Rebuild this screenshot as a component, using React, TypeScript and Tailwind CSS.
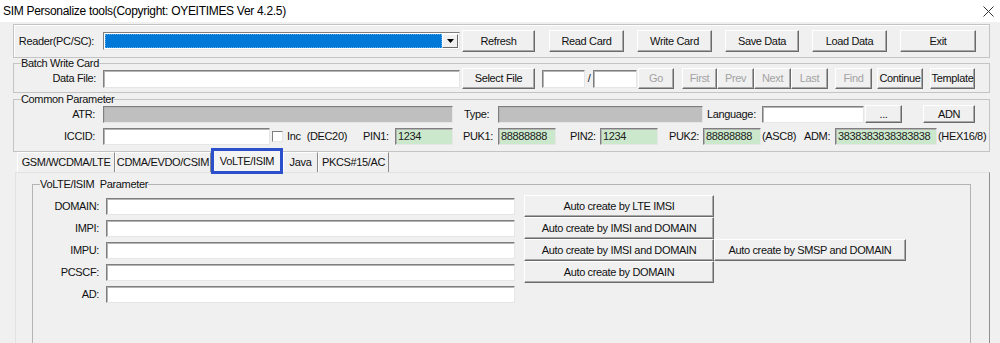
import React from 'react';

const Btn: React.FC<{ w: string; h?: string; disabled?: boolean; className?: string; children: React.ReactNode }> = ({
  w,
  h = 'h-[22px]',
  disabled,
  className = '',
  children
}) => (
  <div
    className={`${w} ${h} ${className} shrink-0 flex items-center justify-center bg-[#f0f0f0] border border-t-white border-l-white border-r-[#6b6b6b] border-b-[#6b6b6b] shadow-[inset_-1px_-1px_0_#a9a9a9] ${
      disabled ? 'text-[#a3a3a3]' : 'text-[#111]'
    }`}
  >
    {children}
  </div>
);

const Field: React.FC<{ w: string; h?: string; bg?: string; children?: React.ReactNode }> = ({
  w,
  h = 'h-[17px]',
  bg = 'bg-white',
  children
}) => (
  <div
    className={`${w} ${h} ${bg} shrink-0 flex items-center pl-[2px] border border-t-[#7f7f7f] border-l-[#7f7f7f] border-r-[#e6e6e6] border-b-[#e6e6e6] shadow-[inset_1px_1px_0_#b4b4b4] text-[#222]`}
  >
    {children}
  </div>
);

const Label: React.FC<{ w: string; children: React.ReactNode; right?: boolean; pad?: string }> = ({
  w,
  children,
  right,
  pad = ''
}) => (
  <div className={`${w} ${pad} shrink-0 whitespace-nowrap ${right ? 'text-right' : 'text-left'}`}>{children}</div>
);

const Tab: React.FC<{ w: string; children: React.ReactNode }> = ({ w, children }) => (
  <div
    className={`${w} h-[20px] shrink-0 flex items-center justify-center border-l border-t border-l-white border-t-white border-r border-r-[#8a8a8a]`}
  >
    {children}
  </div>
);

const volteRows: [string, string[]][] = [
  ['DOMAIN:', ['Auto create by LTE IMSI']],
  ['IMPI:', ['Auto create by IMSI and DOMAIN']],
  ['IMPU:', ['Auto create by IMSI and DOMAIN', 'Auto create by SMSP and DOMAIN']],
  ['PCSCF:', ['Auto create by DOMAIN']],
  ['AD:', []]
];

export default function App() {
  return (
    <div className="w-[1000px] h-[343px] overflow-hidden bg-[#f0f0f0] text-[11px] leading-[13px] text-[#111] font-['Liberation_Sans',Arial,sans-serif] tracking-[-0.35px]">
      {/* title bar */}
      <div className="h-[22px] bg-white flex items-center justify-between pl-[3px] pr-[6px]">
        <span className="text-[12px] tracking-[-0.3px] text-black">SIM Personalize tools(Copyright: OYEITIMES Ver 4.2.5)</span>
        <svg width="11" height="11" viewBox="0 0 11 11" className="mt-[1px]">
          <path d="M0.5 0.5 L10.5 10.5 M10.5 0.5 L0.5 10.5" stroke="#333" strokeWidth="1" />
        </svg>
      </div>

      <div className="pl-[13px]">
        {/* reader row */}
        <div className="mt-[2px] w-[977px] h-[34px] flex items-center border border-[#c4c4c4] shadow-[inset_1px_1px_0_#fff]">
          <Label w="w-[89px]" right pad="pr-[9px]">Reader(PC/SC):</Label>
          <div className="w-[357px] h-[18px] shrink-0 flex border border-t-[#7f7f7f] border-l-[#7f7f7f] border-r-[#e6e6e6] border-b-[#e6e6e6] bg-white p-[1px]">
            <div className="flex-1 bg-[#0078d7] border border-dotted border-[#5aa9ea]" />
            <div className="w-[16px] flex items-center justify-center bg-[#f0f0f0] border border-t-white border-l-white border-r-[#6b6b6b] border-b-[#6b6b6b]">
              <svg width="7" height="4" viewBox="0 0 7 4">
                <path d="M0 0 H7 L3.5 4 Z" fill="#000" />
              </svg>
            </div>
          </div>
          <Btn w="w-[73px]" className="ml-[2px]">Refresh</Btn>
          <Btn w="w-[75px]" className="ml-[14px]">Read Card</Btn>
          <Btn w="w-[75px]" className="ml-[13px]">Write Card</Btn>
          <Btn w="w-[74px]" className="ml-[13px]">Save Data</Btn>
          <Btn w="w-[75px]" className="ml-[13px]">Load Data</Btn>
          <Btn w="w-[76px]" className="ml-[13px]">Exit</Btn>
        </div>

        {/* batch write card */}
        <fieldset className="w-[977px] border border-[#c4c4c4] pb-[3px]">
          <legend className="ml-[7px] leading-[10px]">Batch Write Card</legend>
          <div className="h-[21px] flex items-center">
            <Label w="w-[89px]" right pad="pr-[7px]">Data File:</Label>
            <Field w="w-[357px]" h="h-[18px]" />
            <Btn w="w-[73px]" h="h-[21px]" className="ml-[2px]">Select File</Btn>
            <div className="ml-[7px]">
              <Field w="w-[43px]" h="h-[18px]" />
            </div>
            <div className="w-[8px] text-center shrink-0">/</div>
            <Field w="w-[44px]" h="h-[18px]" />
            <Btn w="w-[36px]" h="h-[21px]" className="ml-[1px]" disabled>Go</Btn>
            <Btn w="w-[35px]" h="h-[21px]" className="ml-[8px]" disabled>First</Btn>
            <Btn w="w-[37px]" h="h-[21px]" disabled>Prev</Btn>
            <Btn w="w-[37px]" h="h-[21px]" disabled>Next</Btn>
            <Btn w="w-[37px]" h="h-[21px]" disabled>Last</Btn>
            <Btn w="w-[37px]" h="h-[21px]" className="ml-[7px]" disabled>Find</Btn>
            <Btn w="w-[46px]" h="h-[21px]" className="ml-[5px]">Continue</Btn>
            <Btn w="w-[45px]" h="h-[21px]" className="ml-[7px]">Template</Btn>
          </div>
        </fieldset>

        {/* common parameter */}
        <fieldset className="mt-[1px] w-[977px] border border-[#c4c4c4] pb-[5px]">
          <legend className="ml-[7px] leading-[10px]">Common Parameter</legend>
          <div className="h-[20px] flex items-center">
            <Label w="w-[89px]" right pad="pr-[8px]">ATR:</Label>
            <Field w="w-[350px]" bg="bg-[#bfbfbf]" />
            <Label w="w-[45px]" pad="pl-[11px]">Type:</Label>
            <Field w="w-[205px]" bg="bg-[#bfbfbf]" />
            <Label w="w-[59px]" pad="pl-[4px]">Language:</Label>
            <Field w="w-[102px]" />
            <Btn w="w-[37px]" h="h-[18px]" className="ml-[1px]">...</Btn>
            <Btn w="w-[52px]" h="h-[18px]" className="ml-[21px]">ADN</Btn>
          </div>
          <div className="mt-[2px] h-[20px] flex items-center">
            <Label w="w-[89px]" right pad="pr-[8px]">ICCID:</Label>
            <Field w="w-[167px]" />
            <div className="ml-[2px] w-[11px] h-[11px] shrink-0 bg-white border border-t-[#7f7f7f] border-l-[#7f7f7f] border-r-[#e6e6e6] border-b-[#e6e6e6]" />
            <div className="w-[79px] shrink-0 pl-[4px] flex">
              <span>Inc</span>
              <span className="ml-[6px]">(DEC20)</span>
            </div>
            <Label w="w-[33px]" pad="pl-[1px]">PIN1:</Label>
            <Field w="w-[58px]" bg="bg-[#cce8cc]">1234</Field>
            <Label w="w-[45px]" pad="pl-[10px]">PUK1:</Label>
            <Field w="w-[58px]" bg="bg-[#cce8cc]">88888888</Field>
            <Label w="w-[44px]" pad="pl-[14px]">PIN2:</Label>
            <Field w="w-[58px]" bg="bg-[#cce8cc]">1234</Field>
            <Label w="w-[45px]" pad="pl-[11px]">PUK2:</Label>
            <Field w="w-[58px]" bg="bg-[#cce8cc]">88888888</Field>
            <Label w="w-[38px]" pad="pl-[1px]">(ASC8)</Label>
            <Label w="w-[36px]" pad="pl-[5px]">ADM:</Label>
            <Field w="w-[102px]" bg="bg-[#cce8cc]">3838383838383838</Field>
            <Label w="w-[50px]" pad="pl-[1px]">(HEX16/8)</Label>
          </div>
        </fieldset>

        {/* tabs */}
        <div className="h-[20px] flex items-end pl-[4px]">
          <Tab w="w-[98px]">GSM/WCDMA/LTE</Tab>
          <Tab w="w-[96px]">CDMA/EVDO/CSIM</Tab>
          <div className="relative z-10 w-[72px] h-[26px] -mt-[4px] -mb-[2px] shrink-0 flex items-center justify-center border-[3px] border-[#2c4fcb] bg-[#f4f4f4]">
            VoLTE/ISIM
          </div>
          <Tab w="w-[35px]">Java</Tab>
          <Tab w="w-[71px]">PKCS#15/AC</Tab>
        </div>

        {/* tab panel */}
        <div className="ml-[2px] w-[975px] h-[260px] border-t border-l border-r border-t-[#e2e2e2] border-l-[#e2e2e2] border-r-[#8f8f8f]">
          <fieldset className="mt-[6px] ml-[16px] w-[939px] h-[240px] border border-[#b4b4b4]">
            <legend className="ml-[7px] leading-[10px]">VoLTE/ISIM&nbsp; Parameter</legend>
            <div className="pt-[6px]">
              {volteRows.map(([label, buttons]) => (
                <div key={label} className="h-[22px] flex items-center">
                  <Label w="w-[73px]" right pad="pr-[7px]">{label}</Label>
                  <Field w="w-[409px]" />
                  {buttons.map((b, i) => (
                    <Btn key={b + i} w={i === 0 ? 'w-[190px]' : 'w-[192px]'} className={i === 0 ? 'ml-[9px]' : ''}>
                      {b}
                    </Btn>
                  ))}
                </div>
              ))}
            </div>
          </fieldset>
        </div>
      </div>
    </div>
  );
}
